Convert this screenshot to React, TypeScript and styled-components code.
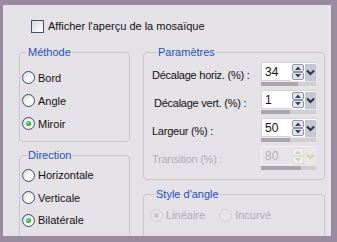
import styled, { createGlobalStyle } from 'styled-components';

const GlobalStyle = createGlobalStyle`
  html, body {
    margin: 0;
    padding: 0;
    background: #9a8aa0;
  }
  * {
    box-sizing: border-box;
  }
`;

const Frame = styled.div`
  width: 337px;
  height: 242px;
  background: #9a8aa0;
  padding: 5px 6px 6px 3px;
  font-family: 'Liberation Sans', Arial, sans-serif;
  font-size: 11px;
  color: #111;
`;

const Panel = styled.div`
  height: 100%;
  background: #e4e2e7;
  overflow: hidden;
  padding: 15px 0 0 16px;
`;

const CheckRow = styled.label`
  display: flex;
  align-items: center;
  gap: 4px;
  margin-left: 12px;
  height: 13px;
  line-height: 13px;
`;

const CheckBox = styled.span`
  width: 13px;
  height: 13px;
  border: 1px solid #3a5478;
  background: linear-gradient(135deg, #d8d8d2 0%, #f4f4f2 70%, #ffffff 100%);
`;

const Columns = styled.div`
  display: grid;
  grid-template-columns: 111px 182px;
  column-gap: 13px;
  margin-top: 13px;
`;

const Column = styled.div<{ gap: number }>`
  display: flex;
  flex-direction: column;
  gap: ${({ gap }) => gap}px;
`;

const Group = styled.fieldset<{ pad: string }>`
  margin: 0;
  min-width: 0;
  border: 1px solid #c9c5cd;
  border-radius: 4px;
  padding: ${({ pad }) => pad};
`;

const Legend = styled.legend`
  color: #1f50b8;
  font-size: 11px;
  line-height: 13px;
  padding: 0 1px;
  margin-left: 5px;
`;

const RadioRow = styled.label<{ h: number }>`
  display: flex;
  align-items: center;
  gap: 3px;
  height: ${({ h }) => h}px;
`;

const Radio = styled.span<{ checked?: boolean; disabled?: boolean }>`
  position: relative;
  width: 13px;
  height: 13px;
  border-radius: 50%;
  border: 1px solid ${({ disabled }) => (disabled ? '#cfcdd3' : '#2f4f78')};
  background: ${({ disabled }) =>
    disabled ? '#e6e4e8' : 'radial-gradient(circle at 70% 70%, #ffffff 0%, #f2f2ee 50%, #d6d6d0 100%)'};
  flex: none;
  &::after {
    content: '';
    display: ${({ checked }) => (checked ? 'block' : 'none')};
    position: absolute;
    left: 3px;
    top: 3px;
    width: 5px;
    height: 5px;
    border-radius: 50%;
    background: ${({ disabled }) =>
      disabled ? '#cccbd0' : 'radial-gradient(circle at 35% 35%, #8fe08f 0%, #2ca52c 60%, #1d861d 100%)'};
  }
`;

const RadioText = styled.span<{ disabled?: boolean }>`
  color: ${({ disabled }) => (disabled ? '#aeacb3' : '#111')};
`;

const ParamRow = styled.div`
  display: grid;
  grid-template-columns: 109px 55px;
  align-items: center;
  height: 28px;
`;

const ParamLabel = styled.span<{ indent?: number; disabled?: boolean }>`
  padding-left: ${({ indent }) => indent || 0}px;
  padding-top: 2px;
  letter-spacing: -0.25px;
  color: ${({ disabled }) => (disabled ? '#b0aeb5' : '#111')};
`;

const Control = styled.div`
  display: flex;
  flex-direction: column;
  width: 55px;
`;

const InputLine = styled.div`
  display: flex;
  height: 19px;
`;

const Field = styled.div<{ disabled?: boolean }>`
  width: 31px;
  height: 19px;
  padding: 2px 0 0 3px;
  font-size: 12px;
  line-height: 14px;
  background: ${({ disabled }) => (disabled ? '#e6e4e8' : '#ffffff')};
  border: 1px solid ${({ disabled }) => (disabled ? '#f2f2f2' : '#d4d2d8')};
  border-right: none;
  color: ${({ disabled }) => (disabled ? '#b4b2b8' : '#111')};
`;

const Buttons = styled.div<{ disabled?: boolean }>`
  display: flex;
  align-items: center;
  gap: 1px;
  padding-left: 1px;
  background: ${({ disabled }) => (disabled ? '#e6e4e8' : '#ffffff')};
  border-top: 1px solid ${({ disabled }) => (disabled ? '#f2f2f2' : '#d4d2d8')};
`;

const Track = styled.div`
  height: 5px;
  background: #d0ced4;
  border-top: 1px solid #e8e6ea;
`;

const Fill = styled.div`
  height: 100%;
  background: #a9a7ae;
`;

const StyleRow = styled.div`
  display: flex;
  gap: 14px;
`;

const Spin = ({ disabled }: { disabled?: boolean }) => {
  const face = disabled ? '#eef0ea' : '#e2e6ee';
  const edge = disabled ? '#d8dcd2' : '#8c94a6';
  const mark = disabled ? '#c8d0c2' : '#3c4252';
  return (
    <svg width="12" height="16" viewBox="0 0 12 16">
      <rect x="0.5" y="0.5" width="11" height="7" rx="1.5" fill={face} stroke={edge} />
      <rect x="0.5" y="8.5" width="11" height="7" rx="1.5" fill={face} stroke={edge} />
      <path d="M3 6 L6 2.5 L9 6 Z" fill={mark} />
      <path d="M3 10 L6 13.5 L9 10 Z" fill={mark} />
    </svg>
  );
};

const Drop = ({ disabled }: { disabled?: boolean }) => (
  <svg width="11" height="17" viewBox="0 0 11 17">
    <rect x="0" y="0" width="11" height="17" fill={disabled ? '#e8eae2' : '#c4c8d4'} />
    <path
      d="M2 6.5 L5.5 10 L9 6.5"
      fill="none"
      stroke={disabled ? '#cdd4c4' : '#2c3444'}
      strokeWidth="2"
    />
  </svg>
);

const params = [
  { label: 'Décalage horiz. (%) :', value: '34', fill: 37, indent: 0 },
  { label: 'Décalage vert. (%) :', value: '1', fill: 29, indent: 2 },
  { label: 'Largeur (%) :', value: '50', fill: 29, indent: 0 },
  { label: 'Transition (%) :', value: '80', fill: 40, indent: 0, disabled: true },
];

const App = () => {
  return (
    <>
      <GlobalStyle />
      <Frame>
        <Panel>
          <CheckRow>
            <CheckBox />
            <span>Afficher l'aperçu de la mosaïque</span>
          </CheckRow>
          <Columns>
            <Column gap={7}>
              <Group pad="7px 2px 6px 2px">
                <Legend>Méthode</Legend>
                <RadioRow h={23}>
                  <Radio />
                  <RadioText>Bord</RadioText>
                </RadioRow>
                <RadioRow h={23}>
                  <Radio />
                  <RadioText>Angle</RadioText>
                </RadioRow>
                <RadioRow h={23}>
                  <Radio checked />
                  <RadioText>Miroir</RadioText>
                </RadioRow>
              </Group>
              <Group pad="2px 2px 16px 2px">
                <Legend>Direction</Legend>
                <RadioRow h={22.5}>
                  <Radio />
                  <RadioText>Horizontale</RadioText>
                </RadioRow>
                <RadioRow h={22.5}>
                  <Radio />
                  <RadioText>Verticale</RadioText>
                </RadioRow>
                <RadioRow h={22.5}>
                  <Radio checked />
                  <RadioText>Bilatérale</RadioText>
                </RadioRow>
              </Group>
            </Column>
            <Column gap={8}>
              <Group pad="1px 8px 7px 8px">
                <Legend>Paramètres</Legend>
                {params.map((p) => (
                  <ParamRow key={p.label}>
                    <ParamLabel indent={p.indent} disabled={p.disabled}>
                      {p.label}
                    </ParamLabel>
                    <Control>
                      <InputLine>
                        <Field disabled={p.disabled}>{p.value}</Field>
                        <Buttons disabled={p.disabled}>
                          <Spin disabled={p.disabled} />
                          <Drop disabled={p.disabled} />
                        </Buttons>
                      </InputLine>
                      <Track>
                        <Fill style={{ width: `${p.fill}px` }} />
                      </Track>
                    </Control>
                  </ParamRow>
                ))}
              </Group>
              <Group pad="7px 6px 20px 6px">
                <Legend>Style d'angle</Legend>
                <StyleRow>
                  <RadioRow h={14}>
                    <Radio checked disabled />
                    <RadioText disabled>Linéaire</RadioText>
                  </RadioRow>
                  <RadioRow h={14}>
                    <Radio disabled />
                    <RadioText disabled>Incurvé</RadioText>
                  </RadioRow>
                </StyleRow>
              </Group>
            </Column>
          </Columns>
        </Panel>
      </Frame>
    </>
  );
};

export default App;
